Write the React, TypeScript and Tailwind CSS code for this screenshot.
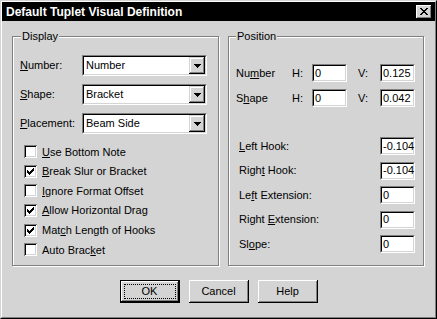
import React from 'react';

const FACE = 'bg-[#d4d4d4]';

const Mn: React.FC<{ children: React.ReactNode }> = ({ children }) => (
  <span className="underline underline-offset-[1px] decoration-[1px]">{children}</span>
);

const Sunken: React.FC<{ className?: string; children?: React.ReactNode }> = ({ className = '', children }) => (
  <div className={`border border-t-[#808080] border-l-[#808080] border-r-white border-b-white ${className}`}>
    <div className="h-full w-full border border-t-black border-l-black border-r-[#d4d4d4] border-b-[#d4d4d4] bg-white">
      {children}
    </div>
  </div>
);

const Select: React.FC<{ value: string }> = ({ value }) => (
  <Sunken className="h-[21px] w-[125px]">
    <div className="flex h-full items-center">
      <span className="flex-1 pl-[2px] text-black">{value}</span>
      <div className="flex h-full w-[16px] items-center justify-center bg-[#d4d4d4] shadow-[inset_-1px_-1px_0_black,inset_1px_1px_0_#d4d4d4,inset_-2px_-2px_0_#808080,inset_2px_2px_0_white]">
        <svg width="7" height="4" viewBox="0 0 7 4" shapeRendering="crispEdges">
          <path d="M0 0h7v1h-7z M1 1h5v1h-5z M2 2h3v1h-3z M3 3h1v1h-1z" fill="black" />
        </svg>
      </div>
    </div>
  </Sunken>
);

const Field: React.FC<{ value: string }> = ({ value }) => (
  <Sunken className="h-[18px] w-[35px]">
    <div className="flex h-full items-center pl-[1px] leading-none text-black">{value}</div>
  </Sunken>
);

const Check: React.FC<{ checked?: boolean; children: React.ReactNode }> = ({ checked, children }) => (
  <div className="flex h-[19.6px] items-center">
    <div className="ml-[4px] flex h-[13px] w-[13px] items-center justify-center bg-white shadow-[inset_1px_1px_0_#808080,inset_-1px_-1px_0_white,inset_2px_2px_0_black,inset_-2px_-2px_0_#d4d4d4]">
      {checked && (
        <svg width="7" height="7" viewBox="0 0 7 7" shapeRendering="crispEdges">
          <path
            d="M6 0h1v1h-1z M5 1h2v1h-2z M0 2h1v1h-1z M4 2h3v1h-3z M0 3h2v1h-2z M3 3h3v1h-3z M0 4h5v1h-5z M1 5h3v1h-3z M2 6h1v1h-1z"
            fill="black"
          />
        </svg>
      )}
    </div>
    <span className="ml-[5px]">{children}</span>
  </div>
);

const GroupBox: React.FC<{ title: string; labelLeft: string; className?: string; children: React.ReactNode }> = ({
  title,
  labelLeft,
  className = '',
  children
}) => (
  <div className={`relative h-[230px] border border-[#808080] shadow-[1px_1px_0_white,inset_1px_1px_0_white] ${className}`}>
    <span className={`absolute top-[-8px] ${labelLeft} ${FACE} px-[1px] leading-[14px]`}>{title}</span>
    {children}
  </div>
);

const Button: React.FC<{ children: React.ReactNode; isDefault?: boolean }> = ({ children, isDefault }) =>
  isDefault ? (
    <div className="h-[23px] w-[60px] border border-black">
      <div className={`flex h-full w-full p-[3px] ${FACE} shadow-[inset_-1px_-1px_0_black,inset_1px_1px_0_white,inset_-2px_-2px_0_#808080]`}>
        <div className="flex flex-1 items-center justify-center border border-dotted border-black">{children}</div>
      </div>
    </div>
  ) : (
    <div className={`flex h-[23px] w-[60px] items-center justify-center ${FACE} shadow-[inset_-1px_-1px_0_black,inset_1px_1px_0_white,inset_-2px_-2px_0_#808080]`}>
      {children}
    </div>
  );

export default function App() {
  return (
    <div className={`h-[319px] w-[437px] border border-t-[#d4d4d4] border-l-[#d4d4d4] border-r-black border-b-black ${FACE} font-['Liberation_Sans',Arial,sans-serif] text-[11px] text-black`}>
      <div className="flex h-full w-full flex-col border border-t-white border-l-white border-r-[#808080] border-b-[#808080]">
        {/* title bar */}
        <div className="flex h-[19px] items-center bg-black pl-[4px] pr-[3px]">
          <span className="flex-1 text-[12px] font-bold text-white">Default Tuplet Visual Definition</span>
          <div className={`flex h-[14px] w-[16px] items-center justify-center ${FACE} shadow-[inset_-1px_-1px_0_black,inset_1px_1px_0_white,inset_-2px_-2px_0_#808080]`}>
            <svg width="8" height="7" viewBox="0 0 8 7" shapeRendering="crispEdges">
              <path
                d="M0 0h2v1h-2z M6 0h2v1h-2z M1 1h2v1h-2z M5 1h2v1h-2z M2 2h4v1h-4z M3 3h2v1h-2z M2 4h4v1h-4z M1 5h2v1h-2z M5 5h2v1h-2z M0 6h2v1h-2z M6 6h2v1h-2z"
                fill="black"
              />
            </svg>
          </div>
        </div>

        <div className="ml-[10px] mt-[15px] flex gap-[9px]">
          <GroupBox title="Display" labelLeft="left-[8px]" className="w-[207px]">
            <div className="flex flex-col pl-[7px] pt-[18px]">
              <div className="flex flex-col gap-[8px]">
                <div className="flex h-[21px] items-center">
                  <span className="w-[62px]"><Mn>N</Mn>umber:</span>
                  <Select value="Number" />
                </div>
                <div className="flex h-[21px] items-center">
                  <span className="w-[62px]"><Mn>S</Mn>hape:</span>
                  <Select value="Bracket" />
                </div>
                <div className="flex h-[21px] items-center">
                  <span className="w-[62px]"><Mn>P</Mn>lacement:</span>
                  <Select value="Beam Side" />
                </div>
              </div>
              <div className="mt-[8px] flex flex-col">
                <Check><Mn>U</Mn>se Bottom Note</Check>
                <Check checked><Mn>B</Mn>reak Slur or Bracket</Check>
                <Check><Mn>I</Mn>gnore Format Offset</Check>
                <Check checked><Mn>A</Mn>llow Horizontal Drag</Check>
                <Check checked>Mat<Mn>c</Mn>h Length of Hooks</Check>
                <Check>Auto Brac<Mn>k</Mn>et</Check>
              </div>
            </div>
          </GroupBox>

          <GroupBox title="Position" labelLeft="left-[7px]" className="w-[196px]">
            <div className="flex flex-col pl-[7px] pt-[27px]">
              <div className="flex h-[18px] items-center">
                <span className="w-[56px]">Nu<Mn>m</Mn>ber</span>
                <span className="w-[20px]">H:</span>
                <Field value="0" />
                <span className="ml-[11px] w-[22px]">V:</span>
                <Field value="0.125" />
              </div>
              <div className="mt-[7px] flex h-[18px] items-center">
                <span className="w-[56px]">S<Mn>h</Mn>ape</span>
                <span className="w-[20px]">H:</span>
                <Field value="0" />
                <span className="ml-[11px] w-[22px]">V:</span>
                <Field value="0.042" />
              </div>
              <div className="mt-[30px] flex flex-col gap-[6.5px]">
                <div className="flex h-[18px] items-center">
                  <span className="w-[144px] pl-[3px]"><Mn>L</Mn>eft Hook:</span>
                  <Field value="-0.104" />
                </div>
                <div className="flex h-[18px] items-center">
                  <span className="w-[144px] pl-[3px]">Righ<Mn>t</Mn> Hook:</span>
                  <Field value="-0.104" />
                </div>
                <div className="flex h-[18px] items-center">
                  <span className="w-[144px] pl-[3px]">Le<Mn>f</Mn>t Extension:</span>
                  <Field value="0" />
                </div>
                <div className="flex h-[18px] items-center">
                  <span className="w-[144px] pl-[3px]">Right <Mn>E</Mn>xtension:</span>
                  <Field value="0" />
                </div>
                <div className="flex h-[18px] items-center">
                  <span className="w-[144px] pl-[3px]">Sl<Mn>o</Mn>pe:</span>
                  <Field value="0" />
                </div>
              </div>
            </div>
          </GroupBox>
        </div>

        <div className="mt-[14px] flex justify-center gap-[9px]">
          <Button isDefault>OK</Button>
          <Button>Cancel</Button>
          <Button>Help</Button>
        </div>
      </div>
    </div>
  );
}
